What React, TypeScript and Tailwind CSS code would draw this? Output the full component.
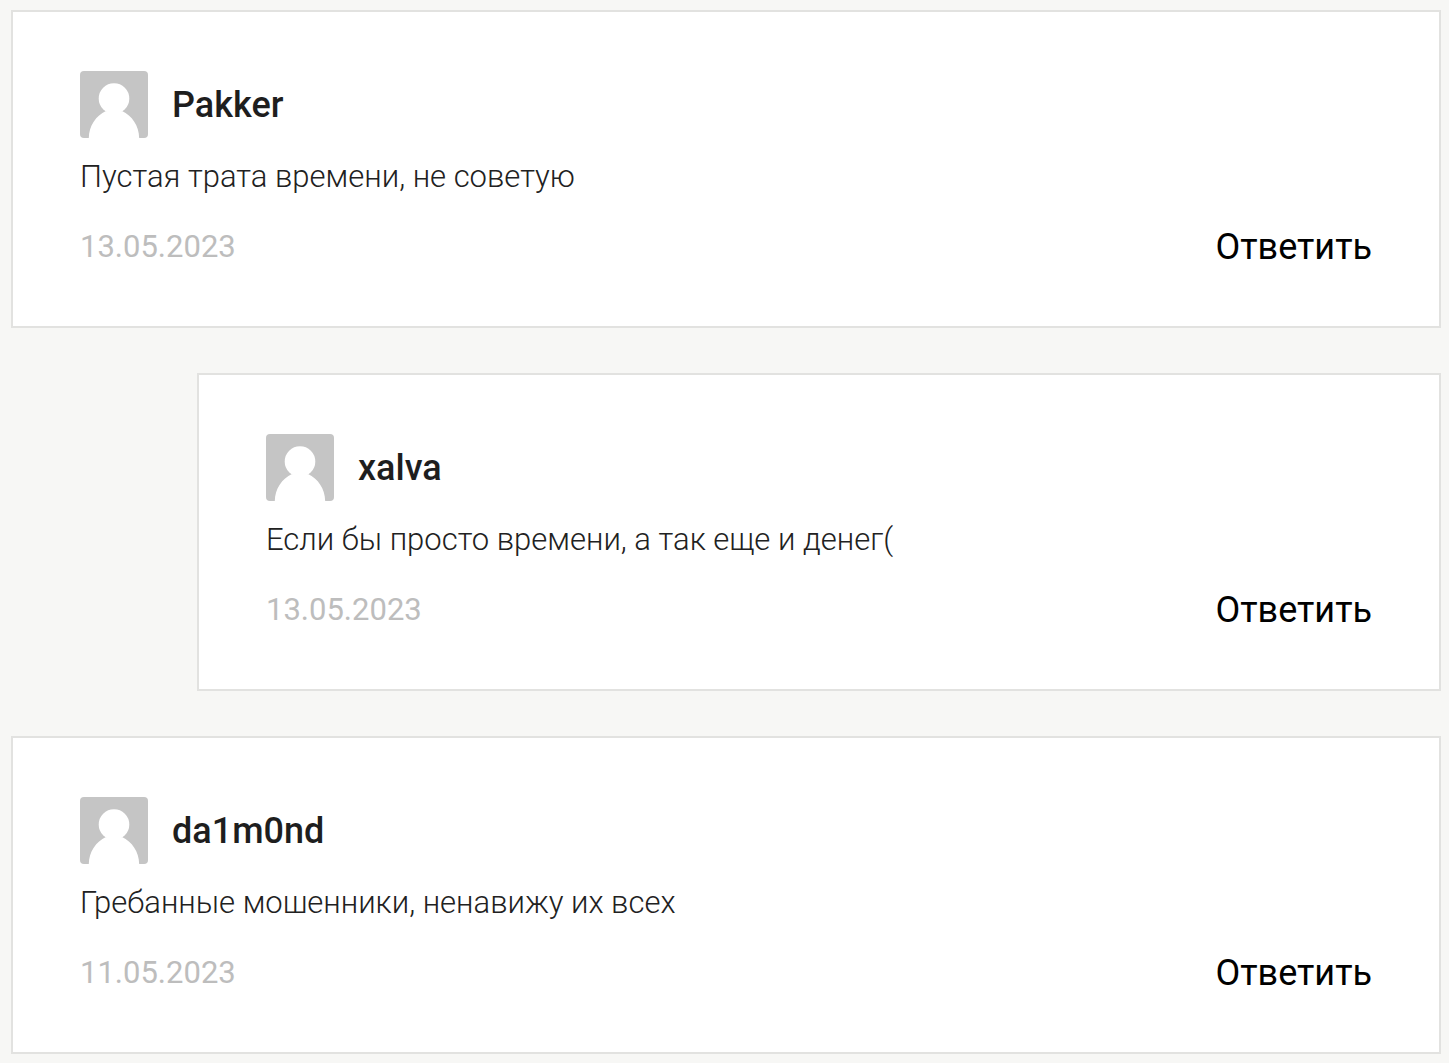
interface Comment {
  id: number;
  author: string;
  text: string;
  date: string;
  reply?: boolean;
}

const COMMENTS: Comment[] = [
  { id: 1, author: "Pakker", text: "Пустая трата времени, не советую", date: "13.05.2023" },
  { id: 2, author: "xalva", text: "Если бы просто времени, а так еще и денег(", date: "13.05.2023", reply: true },
  { id: 3, author: "da1m0nd", text: "Гребанные мошенники, ненавижу их всех", date: "11.05.2023" },
];

function Avatar() {
  return (
    <svg className="h-[67px] w-[68px] shrink-0 rounded" viewBox="0 0 68 67" aria-hidden="true">
      <rect width="68" height="67" fill="#c5c5c5" />
      <circle cx="34" cy="27.5" r="15.3" fill="#fff" />
      <path
        fill="#fff"
        d="M26 40C28.500 41.500 39.500 41.500 42 40C52 44.500 59 55 59.200 67H8.800C9 55 16 44.500 26 40Z"
      />
    </svg>
  );
}

function CommentCard({ comment }: { comment: Comment }) {
  return (
    <li
      className={`border-2 border-[#e2e2e0] bg-white px-[67px] pt-[59px] pb-14 ${
        comment.reply ? "ml-[186px]" : ""
      }`}
    >
      <article>
        <header className="flex items-center gap-6">
          <Avatar />
          <h3 className="text-4xl leading-[38px] font-medium text-[#1e1e1e]">{comment.author}</h3>
        </header>
        <p className="mt-4 text-[31px] leading-[46px] font-light text-[#212121]">{comment.text}</p>
        <footer className="mt-6 flex items-center justify-between">
          <time className="text-[31px] leading-[46px] text-[#bdbdbd]">{comment.date}</time>
          <button type="button" className="cursor-pointer text-4xl text-black">
            Ответить
          </button>
        </footer>
      </article>
    </li>
  );
}

export default function App() {
  return (
    <main className="min-h-screen bg-[#f7f7f5] pt-[10px] pr-2 pb-[10px] pl-[11px] font-['Roboto',sans-serif]">
      <ul className="flex flex-col gap-[45px]">
        {COMMENTS.map((comment) => (
          <CommentCard key={comment.id} comment={comment} />
        ))}
      </ul>
    </main>
  );
}
